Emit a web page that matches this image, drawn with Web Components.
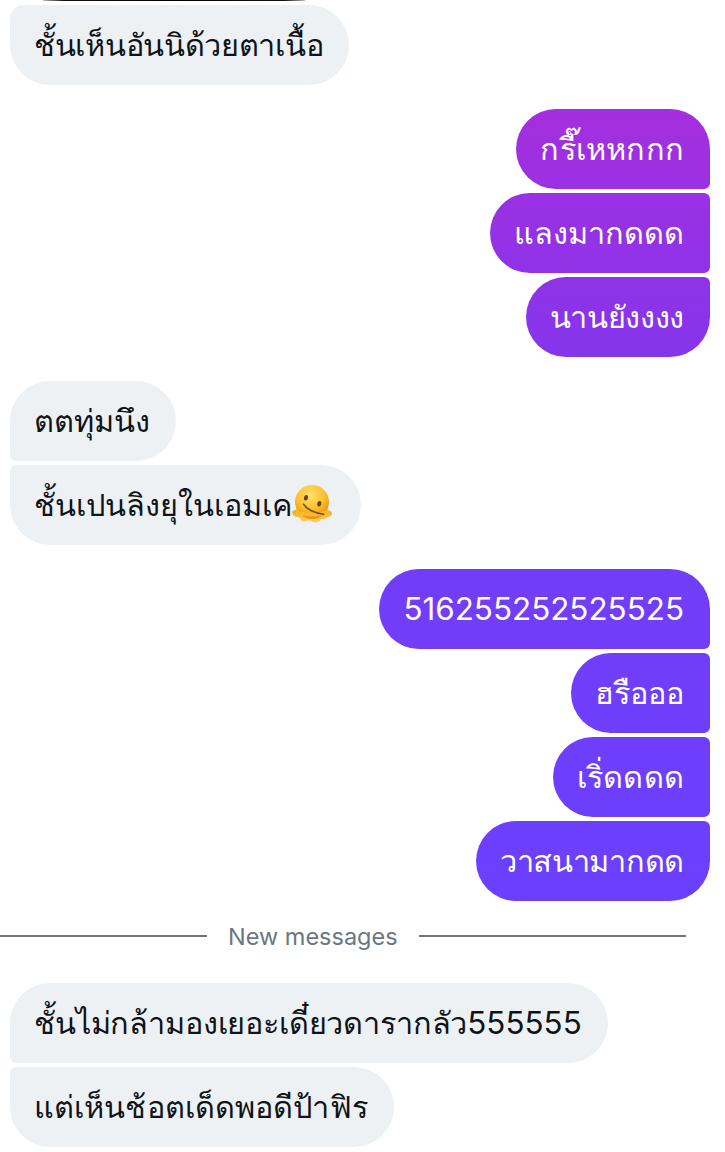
<!DOCTYPE html>
<html lang="th">
<head>
<meta charset="utf-8">
<title>Messages</title>
<style>
	html, body { margin: 0; padding: 0; background: #fff; }
	body { font-family: "Liberation Sans", sans-serif; }
</style>
</head>
<body>

<chat-thread>
	<media-edge></media-edge>
	<bubble-group side="in" first-small>
		<chat-bubble style="letter-spacing: -.3px">ชั้นเห็นอันนิด้วยตาเนื้อ</chat-bubble>
	</bubble-group>
	<bubble-group side="out">
		<chat-bubble style="letter-spacing: .2px">กรี๊เหหกกก</chat-bubble>
		<chat-bubble style="letter-spacing: .05px">แลงมากดดด</chat-bubble>
		<chat-bubble style="letter-spacing: -.35px">นานยังงงง</chat-bubble>
	</bubble-group>
	<bubble-group side="in">
		<chat-bubble>ตตทุ่มนึง</chat-bubble>
		<chat-bubble>ชั้นเปนลิงยุในเอมเค<melting-face></melting-face></chat-bubble>
	</bubble-group>
	<bubble-group side="out">
		<chat-bubble><latin-digits>516255252525525</latin-digits></chat-bubble>
		<chat-bubble style="letter-spacing: -.1px">ฮรือออ</chat-bubble>
		<chat-bubble style="letter-spacing: .25px">เริ่ดดดด</chat-bubble>
		<chat-bubble style="letter-spacing: -.3px">วาสนามากดด</chat-bubble>
	</bubble-group>
	<new-divider>New messages</new-divider>
	<bubble-group side="in">
		<chat-bubble style="letter-spacing: -.15px">ชั้นไม่กล้ามองเยอะเดี๋ยวดารากลัว<latin-digits>555555</latin-digits></chat-bubble>
		<chat-bubble style="letter-spacing: .1px">แต่เห็นช้อตเด็ดพอดีป้าฟิร</chat-bubble>
	</bubble-group>
</chat-thread>

<script>
class ChatThread extends HTMLElement {
	constructor() {
		super();
		const shadow = this.attachShadow({mode: 'open'});
		shadow.innerHTML = `<style>
			:host { display: block; width: 725px; height: 1152px; overflow: hidden; }
		</style><slot></slot>`;
	}
}

// Bottom edge of the picture that scrolled off above the first bubble
class MediaEdge extends HTMLElement {
	constructor() {
		super();
		const shadow = this.attachShadow({mode: 'open'});
		shadow.innerHTML = `<style>
			:host { display: block; height: 5px; }
			div { width: 262px; height: 1px; margin-left: 43px; background: linear-gradient(90deg, #bbb, #111 8%, #000 50%, #111 92%, #bbb); }
		</style><div></div>`;
	}
}

class BubbleGroup extends HTMLElement {
	constructor() {
		super();
		const shadow = this.attachShadow({mode: 'open'});
		shadow.innerHTML = `<style>
			:host { display: flex; flex-direction: column; gap: 4px; padding: 0 15px 0 10px; margin-bottom: 24px; align-items: flex-start; }
			:host([side="out"]) { align-items: flex-end; }
		</style><slot></slot>`;
	}

	connectedCallback() {
		const bubbles = this.querySelectorAll('chat-bubble');
		const side = this.getAttribute('side');
		bubbles.forEach((bubble, i) => {
			bubble.setAttribute('side', side);
			// Corners on the sender's side tighten where bubbles touch
			const big = 40, small = 6;
			const top = i === 0 ? big : small;
			const bottom = i === bubbles.length - 1 ? big : small;
			bubble.style.setProperty('--r-top', (i === 0 && this.hasAttribute('first-small') ? 14 : top) + 'px');
			bubble.style.setProperty('--r-bottom', bottom + 'px');
		});
	}
}

class ChatBubble extends HTMLElement {
	constructor() {
		super();
		const shadow = this.attachShadow({mode: 'open'});
		shadow.innerHTML = `<style>
			:host {
				display: flex;
				align-items: center;
				height: 80px;
				box-sizing: border-box;
				padding: 0 26px 0 24px;
				font-size: 30.7px;
				color: #0f1419;
				background: #eef1f4;
				white-space: nowrap;
				border-radius: var(--r-top) 40px 40px var(--r-bottom);
			}
			:host([side="out"]) {
				color: #fff;
				background: linear-gradient(180deg, #a52ede 110px, #8635ec 350px, #733df7 570px, #6a40ff 900px) fixed;
				border-radius: 40px var(--r-top) var(--r-bottom) 40px;
			}
		</style><slot></slot>`;
	}
}

// The digits in the reference are set in the system latin face
class LatinDigits extends HTMLElement {
	constructor() {
		super();
		const shadow = this.attachShadow({mode: 'open'});
		shadow.innerHTML = `<style>
			:host { display: inline; font-family: Inter, "Liberation Sans", sans-serif; font-size: 31.4px; letter-spacing: 0; }
		</style><slot></slot>`;
	}
}

class MeltingFace extends HTMLElement {
	constructor() {
		super();
		const shadow = this.attachShadow({mode: 'open'});
		shadow.innerHTML = `<style>
			:host { display: inline-block; width: 40px; height: 40px; margin: 0 3px 0 -1px; }
			svg { display: block; }
		</style>
		<svg width="40" height="40" viewBox="0 0 40 40">
			<defs>
				<radialGradient id="skin" cx="45%" cy="30%" r="70%">
					<stop offset="0" stop-color="#ffe26a"/>
					<stop offset="0.6" stop-color="#fbc02a"/>
					<stop offset="1" stop-color="#ea8e12"/>
				</radialGradient>
				<linearGradient id="melt" x1="0" y1="0" x2="0" y2="1">
					<stop offset="0" stop-color="#f4a81f"/>
					<stop offset="1" stop-color="#fbd062"/>
				</linearGradient>
			</defs>
			<path fill="url(#melt)" d="M0 27c1-2 3-2 5-2h29c3 0 6 1 6 4 0 2-3 3-5 3-1 3-4 2-6 2-1 3-5 4-8 3-2-1-3-2-5-2-2 2-6 2-7 0-1-2-1-3-3-3-3 0-6-2-6-5z"/>
			<circle cx="20" cy="17" r="17" fill="url(#skin)"/>
			<path fill="#f8b92a" d="M4 24c5 5 27 5 32 0l1 5c-5 3-29 3-33 0z"/>
			<ellipse cx="14" cy="12.7" rx="2" ry="2.8" transform="rotate(15 14 12.7)" fill="#6a4212"/>
			<ellipse cx="27.3" cy="18.7" rx="2" ry="2.8" transform="rotate(15 27.3 18.7)" fill="#6a4212"/>
			<path fill="none" stroke="#7a4c12" stroke-width="1.6" stroke-linecap="round" d="M11.7 19.3c3 5 11 9 20 10"/>
		</svg>`;
	}
}

class NewDivider extends HTMLElement {
	constructor() {
		super();
		const shadow = this.attachShadow({mode: 'open'});
		shadow.innerHTML = `<style>
			:host { display: flex; align-items: center; gap: 21px; height: 22px; padding-right: 39px; margin: 0 0 36px; font-size: 23.5px; color: #6b7680; }
			i { flex: 1; height: 2px; background: #6e7479; }
			i:first-of-type { flex: 0 0 207px; }
			span { font-family: Inter, "Liberation Sans", sans-serif; }
		</style><i></i><span><slot></slot></span><i></i>`;
	}
}

customElements.define('chat-thread', ChatThread);
customElements.define('media-edge', MediaEdge);
customElements.define('bubble-group', BubbleGroup);
customElements.define('chat-bubble', ChatBubble);
customElements.define('latin-digits', LatinDigits);
customElements.define('melting-face', MeltingFace);
customElements.define('new-divider', NewDivider);
</script>
</body>
</html>
